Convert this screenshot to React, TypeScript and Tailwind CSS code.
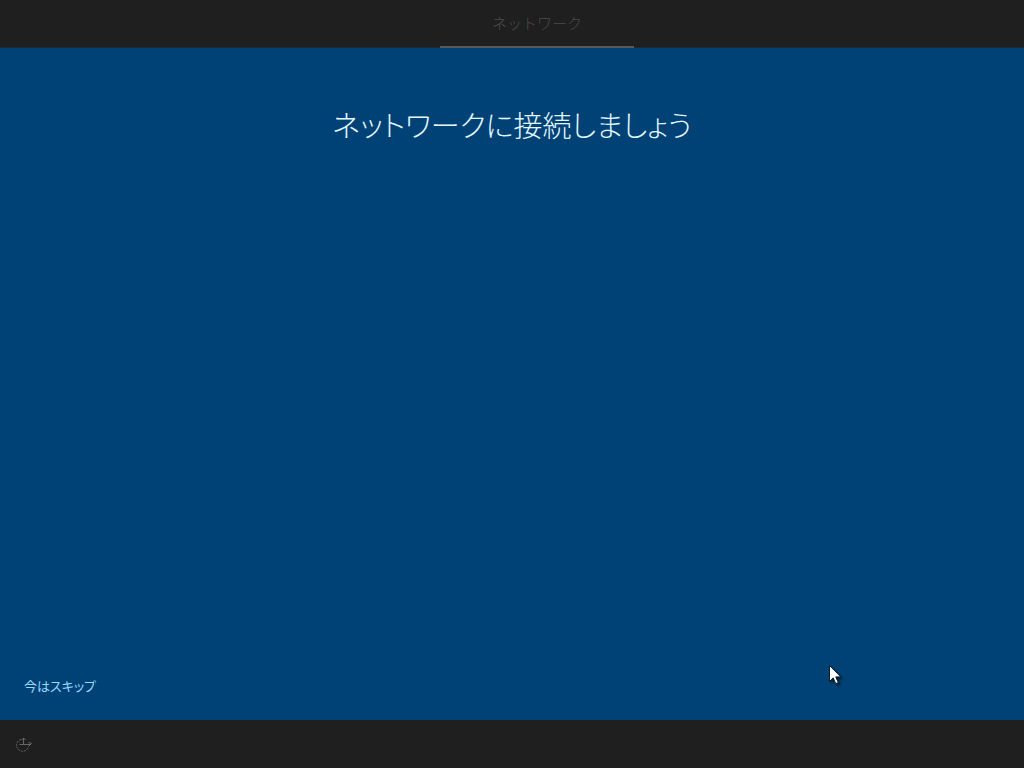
function EaseOfAccessIcon() {
  return (
    <svg
      className="h-4 w-4"
      viewBox="0 0 16 16"
      fill="none"
      stroke="currentColor"
      strokeWidth="1"
      aria-hidden="true"
    >
      <path d="M5 3.5A6 6 0 1 0 12.5 10.5" strokeDasharray="2 1" />
      <path d="M7.5 8.5V2M5.5 4L7.5 2L9.5 4" />
      <path d="M3.5 8.5H15M12.5 6.5L15.5 7.5L13 10" />
    </svg>
  );
}

function Pointer() {
  return (
    <svg
      className="pointer-events-none absolute left-[829px] top-[665px] h-5 w-3 overflow-visible drop-shadow-[2px_2px_1px_rgba(0,0,0,0.5)]"
      viewBox="0 0 12 20"
      aria-hidden="true"
    >
      <path
        d="M0.5 0.5V16.5L4.2 12.9L6.8 18.7L9.3 17.6L6.8 11.9H11.8Z"
        fill="#ffffff"
        stroke="#0b1a2b"
        strokeWidth="1"
      />
    </svg>
  );
}

export default function App() {
  return (
    <div
      lang="ja"
      className="relative flex h-screen flex-col overflow-hidden bg-[#004275] font-['Noto_Sans_CJK_JP',sans-serif]"
    >
      <header className="flex h-12 shrink-0 justify-center border-b border-[#1b2b38] bg-[#1f1f1f] pl-[50px]">
        <nav className="flex">
          <a
            href="#network"
            aria-current="step"
            className="-mb-px flex w-[194px] items-center justify-center border-b-2 border-[#5a5a5a] text-[15px] font-light text-[#4b4b4b]"
          >
            ネットワーク
          </a>
        </nav>
      </header>

      <main className="flex flex-1 flex-col px-6 pb-5 [font-feature-settings:'palt']">
        <h1 className="mt-13 text-center text-[29px] font-light leading-12 text-[#e4f8ff]">
          ネットワークに接続しましょう
        </h1>
        <div className="mt-auto pb-0.5">
          <button type="button" className="block text-[13px] leading-6 text-[#99dcff]">
            今はスキップ
          </button>
        </div>
      </main>

      <footer className="flex h-12 shrink-0 items-center bg-[#1f1f1f] px-4">
        <button type="button" aria-label="簡単操作" className="text-[#686868]">
          <EaseOfAccessIcon />
        </button>
      </footer>

      <Pointer />
    </div>
  );
}
